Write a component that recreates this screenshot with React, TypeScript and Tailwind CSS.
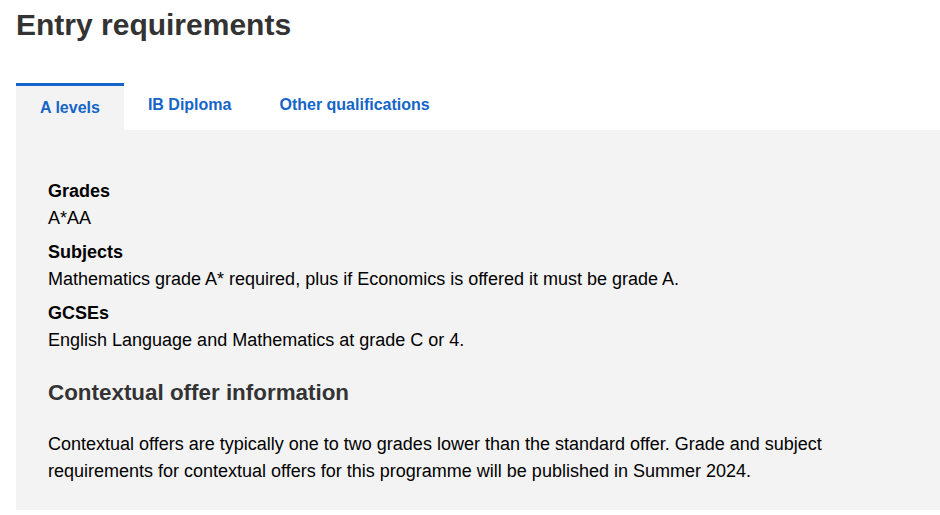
const tabs = ['A levels', 'IB Diploma', 'Other qualifications'];

export default function App() {
  return (
    <div className="min-h-[515px] bg-white pl-4 font-['Liberation_Sans',Arial,sans-serif]">
      <h1 className="pt-[7px] text-[30px] font-bold leading-[36px] text-[#333333]">Entry requirements</h1>

      <div className="mt-10 flex items-start">
        {tabs.map((t, i) => (
          <div
            key={t}
            className={
              i === 0
                ? 'h-[47px] border-t-[3px] border-[#1565c8] bg-[#f3f3f3] px-6 pt-[10px] text-base font-bold leading-6 text-[#1565c8]'
                : 'h-[47px] px-6 pt-[10px] text-base font-bold leading-6 text-[#1565c8]'
            }
          >
            {t}
          </div>
        ))}
      </div>

      <div className="bg-[#f3f3f3] pb-[25px] pl-8 pr-8 pt-12 text-[18px] leading-[27px] text-black">
        <dl>
          <dt className="font-bold">Grades</dt>
          <dd className="mb-[7px]">A*AA</dd>
          <dt className="font-bold">Subjects</dt>
          <dd className="mb-[7px]">Mathematics grade A* required, plus if Economics is offered it must be grade A.</dd>
          <dt className="font-bold">GCSEs</dt>
          <dd>English Language and Mathematics at grade C or 4.</dd>
        </dl>
        <h2 className="mt-[26px] text-[22.4px] font-bold leading-[26px] text-[#333333]">Contextual offer information</h2>
        <p className="mt-[25px]">
          Contextual offers are typically one to two grades lower than the standard offer. Grade and subject requirements
          for contextual offers for this programme will be published in Summer 2024.
        </p>
      </div>
    </div>
  );
}
